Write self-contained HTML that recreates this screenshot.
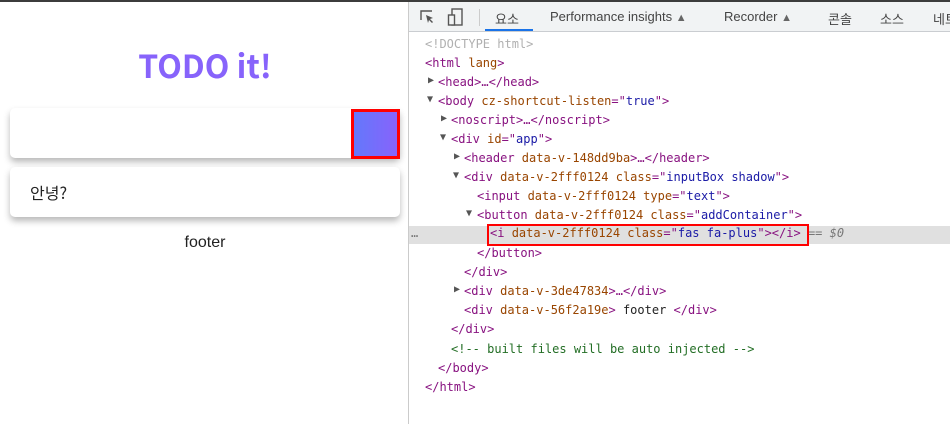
<!DOCTYPE html>
<html><head><meta charset="utf-8">
<style>
*{margin:0;padding:0;box-sizing:border-box}
body{width:950px;height:424px;overflow:hidden;background:#fff;position:relative;font-family:"Liberation Sans","Noto Sans CJK KR",sans-serif}
.topbar{position:absolute;left:0;top:0;width:950px;height:2px;background:#3c3c3c}
.title{position:absolute;left:0;width:410px;top:42px;text-align:center;font-size:32px;font-weight:bold;color:#8763fb;font-family:"Noto Sans CJK KR","Liberation Sans",sans-serif}
.input{position:absolute;left:10px;top:108px;width:390px;height:50px;background:#fff;border-radius:5px;box-shadow:0 4px 7px rgba(0,0,0,.28)}
.btn{position:absolute;left:351px;top:109px;width:49px;height:50px;border:3px solid #f00;background:linear-gradient(to right,#6478fb,#8763fb)}
.item{position:absolute;left:10px;top:167px;width:390px;height:50px;background:#fff;border-radius:5px;box-shadow:0 4px 7px rgba(0,0,0,.28);font-size:16px;line-height:50px;padding-left:20px;font-family:"Noto Sans CJK KR",sans-serif;color:#222}
.footer{position:absolute;left:0;width:410px;top:234px;text-align:center;font-size:16px;color:#222}
.divider{position:absolute;left:408px;top:2px;width:1px;height:422px;background:#cbcbcb}
.tb{position:absolute;left:409px;top:2px;width:541px;height:30px;background:#f1f3f4;border-bottom:1px solid #cacdd1}
.tab{position:absolute;top:9px;font-size:13px;color:#444;font-family:"Liberation Sans","Noto Sans CJK KR",sans-serif;white-space:nowrap}
.ul{position:absolute;left:485px;top:29px;width:48px;height:2px;background:#1a73e8}
.code{position:absolute;left:409px;top:35px;width:541px;font-family:"DejaVu Sans Mono",monospace;font-size:12px}
.l{position:absolute;white-space:pre;height:19px;line-height:19px}
.t{color:#881280}.a{color:#994500}.v{color:#1a1aa6}.g{color:#b0b0b0}.c{color:#236e25}.k{color:#222}
.tri{position:absolute;font-size:10px;color:#555}
.sel{position:absolute;left:409px;top:226px;width:541px;height:18px;background:#e0e0e0}
.box{position:absolute;left:487px;top:224px;width:322px;height:22px;border:2px solid #f00}
</style></head><body>
<div class="topbar"></div>
<div class="title">TODO it!</div>
<div class="input"></div>
<div class="btn"></div>
<div class="item">안녕?</div>
<div class="footer">footer</div>
<div class="divider"></div>
<div class="tb">
<svg style="position:absolute;left:10px;top:6px" width="18" height="18" viewBox="0 0 18 18"><path d="M2 12V3h11" fill="none" stroke="#555" stroke-width="1.4"/><path d="M7 7l7 3-3 1 3 3-1 1-3-3-1 3z" fill="#555"/></svg>
<svg style="position:absolute;left:38px;top:5px" width="18" height="20" viewBox="0 0 18 20"><rect x="5" y="2" width="10" height="16" fill="none" stroke="#555" stroke-width="1.4"/><rect x="1.5" y="8" width="6" height="10" fill="#f1f3f4" stroke="#555" stroke-width="1.4"/></svg>
<div style="position:absolute;left:70px;top:7px;width:1px;height:17px;background:#ccc"></div>
</div>
<div class="tab" style="left:495px">요소</div>
<div class="tab" style="left:550px">Performance insights <span style="font-size:11px;color:#666">▲</span></div>
<div class="tab" style="left:724px">Recorder <span style="font-size:11px;color:#666">▲</span></div>
<div class="tab" style="left:828px">콘솔</div>
<div class="tab" style="left:880px">소스</div>
<div class="tab" style="left:933px">네트</div>
<div class="ul"></div>
<div class="sel"></div>
<div class="code">
<div class="l g" style="left:16px;top:0px">&lt;!DOCTYPE html&gt;</div>
<div class="l" style="left:16px;top:19px"><span class="t">&lt;html </span><span class="a">lang</span><span class="t">&gt;</span></div>
<span class="tri" style="left:19px;top:40px">▶</span><div class="l t" style="left:29px;top:38px">&lt;head&gt;…&lt;/head&gt;</div>
<span class="tri" style="left:18px;top:59px">▼</span><div class="l" style="left:29px;top:57px"><span class="t">&lt;body </span><span class="a">cz-shortcut-listen</span><span class="t">="</span><span class="v">true</span><span class="t">"&gt;</span></div>
<span class="tri" style="left:32px;top:78px">▶</span><div class="l t" style="left:42px;top:76px">&lt;noscript&gt;…&lt;/noscript&gt;</div>
<span class="tri" style="left:31px;top:97px">▼</span><div class="l" style="left:42px;top:95px"><span class="t">&lt;div </span><span class="a">id</span><span class="t">="</span><span class="v">app</span><span class="t">"&gt;</span></div>
<span class="tri" style="left:45px;top:116px">▶</span><div class="l" style="left:55px;top:114px"><span class="t">&lt;header </span><span class="a">data-v-148dd9ba</span><span class="t">&gt;…&lt;/header&gt;</span></div>
<span class="tri" style="left:44px;top:135px">▼</span><div class="l" style="left:55px;top:133px"><span class="t">&lt;div </span><span class="a">data-v-2fff0124 class</span><span class="t">="</span><span class="v">inputBox shadow</span><span class="t">"&gt;</span></div>
<div class="l" style="left:68px;top:152px"><span class="t">&lt;input </span><span class="a">data-v-2fff0124 type</span><span class="t">="</span><span class="v">text</span><span class="t">"&gt;</span></div>
<span class="tri" style="left:57px;top:173px">▼</span><div class="l" style="left:68px;top:171px"><span class="t">&lt;button </span><span class="a">data-v-2fff0124 class</span><span class="t">="</span><span class="v">addContainer</span><span class="t">"&gt;</span></div>
<div class="l" style="left:2px;top:189px;color:#777">…</div>
<div class="l" style="left:81px;top:189px"><span class="t">&lt;i </span><span class="a">data-v-2fff0124 class</span><span class="t">="</span><span class="v">fas fa-plus</span><span class="t">"&gt;&lt;/i&gt;</span> <span style="color:#777;font-style:italic">== $0</span></div>
<div class="l t" style="left:68px;top:209px">&lt;/button&gt;</div>
<div class="l t" style="left:55px;top:228px">&lt;/div&gt;</div>
<span class="tri" style="left:45px;top:249px">▶</span><div class="l" style="left:55px;top:247px"><span class="t">&lt;div </span><span class="a">data-v-3de47834</span><span class="t">&gt;…&lt;/div&gt;</span></div>
<div class="l" style="left:55px;top:266px"><span class="t">&lt;div </span><span class="a">data-v-56f2a19e</span><span class="t">&gt;</span><span class="k"> footer </span><span class="t">&lt;/div&gt;</span></div>
<div class="l t" style="left:42px;top:285px">&lt;/div&gt;</div>
<div class="l c" style="left:42px;top:305px">&lt;!-- built files will be auto injected --&gt;</div>
<div class="l t" style="left:29px;top:324px">&lt;/body&gt;</div>
<div class="l t" style="left:16px;top:343px">&lt;/html&gt;</div>
</div>
<div class="box"></div>
</body></html>
